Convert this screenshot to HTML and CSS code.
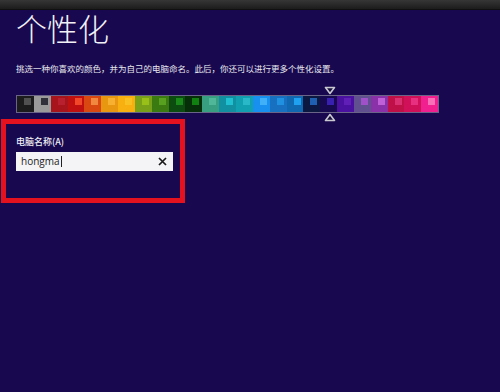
FILE: index.html
```html
<!DOCTYPE html>
<html lang="zh-CN">
<head>
    <meta charset="UTF-8">
    <meta name="viewport" content="width=device-width, initial-scale=1.0">
    <title>个性化</title>
    <link rel="stylesheet" href="styles.css">
</head>
<body>
    <div class="top-bar"></div>
    <div class="page">
        <h1 class="page-title">个性化</h1>
        <p class="page-desc">挑选一种你喜欢的颜色，并为自己的电脑命名。此后，你还可以进行更多个性化设置。</p>

        <div class="palette-wrap">
            <div class="palette">
                <div class="swatch" style="--bg:#1c1c1c;--fg:#505050"></div>
                <div class="swatch" style="--bg:#9a9a9a;--fg:#30303a"></div>
                <div class="swatch" style="--bg:#a8141c;--fg:#b82030"></div>
                <div class="swatch" style="--bg:#c01010;--fg:#f04828"></div>
                <div class="swatch" style="--bg:#d84810;--fg:#f08840"></div>
                <div class="swatch" style="--bg:#e89810;--fg:#f8b030"></div>
                <div class="swatch" style="--bg:#f8b010;--fg:#f8c020"></div>
                <div class="swatch" style="--bg:#78a018;--fg:#98c018"></div>
                <div class="swatch" style="--bg:#3a7a10;--fg:#58a020"></div>
                <div class="swatch" style="--bg:#0c4c10;--fg:#1a8a1a"></div>
                <div class="swatch" style="--bg:#062e08;--fg:#108010"></div>
                <div class="swatch" style="--bg:#38a080;--fg:#50b898"></div>
                <div class="swatch" style="--bg:#1090a0;--fg:#20c0d0"></div>
                <div class="swatch" style="--bg:#10a0b0;--fg:#28b8c8"></div>
                <div class="swatch" style="--bg:#1890f0;--fg:#40b0f8"></div>
                <div class="swatch" style="--bg:#1870c0;--fg:#2090e0"></div>
                <div class="swatch" style="--bg:#1068b0;--fg:#20a0f0"></div>
                <div class="swatch" style="--bg:#0c1840;--fg:#2060b0"></div>
                <div class="swatch" style="--bg:#180a50;--fg:#3a20b0"></div>
                <div class="swatch" style="--bg:#4a10a0;--fg:#6020b8"></div>
                <div class="swatch" style="--bg:#605090;--fg:#a050c8"></div>
                <div class="swatch" style="--bg:#8a30a8;--fg:#c060d8"></div>
                <div class="swatch" style="--bg:#c01048;--fg:#d83070"></div>
                <div class="swatch" style="--bg:#d01058;--fg:#e83080"></div>
                <div class="swatch" style="--bg:#f02090;--fg:#f870b8"></div>
            </div>
            <!-- selection markers -->
            <svg class="marker marker-top" width="12" height="9" viewBox="0 0 12 9">
                <path d="M1.5 1.5 H10.5 L6 7.5 Z" fill="#1a1040" stroke="#c8c8d0" stroke-width="1.6" stroke-linejoin="round"/>
            </svg>
            <svg class="marker marker-bottom" width="12" height="9" viewBox="0 0 12 9">
                <path d="M1.5 7.5 H10.5 L6 1.5 Z" fill="#1a1040" stroke="#c8c8d0" stroke-width="1.6" stroke-linejoin="round"/>
            </svg>
        </div>

        <div class="name-box">
            <label class="name-label" for="pcName">电脑名称(A)</label>
            <div class="name-input">
                <span class="name-value">hongma</span><span class="caret"></span>
                <svg class="clear-icon" width="9" height="9" viewBox="0 0 9 9">
                    <path d="M1 1 L8 8 M8 1 L1 8" stroke="#1a1a1a" stroke-width="1.7"/>
                </svg>
            </div>
        </div>
    </div>
</body>
</html>
```

FILE: styles.css
```css
* {
    margin: 0;
    padding: 0;
    box-sizing: border-box;
}

body {
    background: #18084f;
    width: 500px;
    height: 392px;
    overflow: hidden;
    font-family: "Noto Sans CJK SC", "Noto Sans", sans-serif;
    color: #ececf2;
}

.top-bar {
    height: 10px;
    background: linear-gradient(#363636, #1c1c1c);
    border-bottom: 1px solid #101010;
}

.page {
    padding: 0 16px;
}

.page-title {
    font-size: 31px;
    font-weight: 300;
    line-height: 1;
    margin-top: 2px;
    color: #f2f2f6;
}

.page-desc {
    font-size: 8.5px;
    line-height: 1;
    margin-top: 21px;
    color: #e8e8f0;
    white-space: nowrap;
}

.palette-wrap {
    position: relative;
    width: 423px;
    margin-top: 22px;
}

.palette {
    display: flex;
    height: 18px;
    border: 1px solid #6a6488;
}

.swatch {
    flex: 1;
    background: var(--bg);
    position: relative;
}

.swatch::after {
    content: "";
    position: absolute;
    top: 2px;
    left: 7px;
    width: 7px;
    height: 7px;
    background: var(--fg);
}

.marker {
    position: absolute;
    left: 308px;
}

.marker-top {
    top: -9px;
}

.marker-bottom {
    top: 18px;
}

.name-box {
    margin: 6px 0 0 -15px;
    width: 184px;
    height: 84px;
    border: 5px solid #e4121e;
    padding: 13px 0 0 10px;
}

.name-label {
    display: block;
    font-size: 9px;
    font-weight: 500;
    line-height: 1;
    color: #f0f0f6;
}

.name-input {
    display: flex;
    align-items: center;
    width: 157px;
    height: 19px;
    margin-top: 6px;
    padding: 0 6px 0 5px;
    background: #f4f4f6;
    font-family: "Open Sans", "Noto Sans", sans-serif;
    font-size: 10px;
    color: #222;
}

.caret {
    width: 1px;
    height: 11px;
    background: #222;
    margin-left: 1px;
}

.clear-icon {
    margin-left: auto;
}
```
